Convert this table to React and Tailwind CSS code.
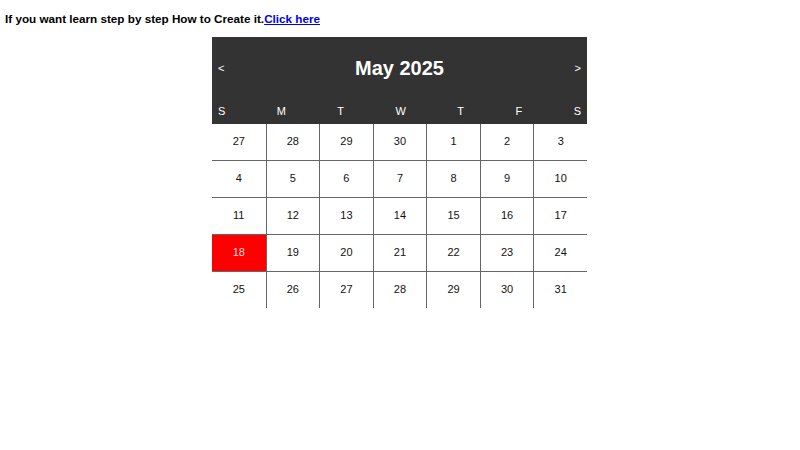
export default function App() {
  const days = ["S", "M", "T", "W", "T", "F", "S"];
  const nums = [
    27, 28, 29, 30, 1, 2, 3,
    4, 5, 6, 7, 8, 9, 10,
    11, 12, 13, 14, 15, 16, 17,
    18, 19, 20, 21, 22, 23, 24,
    25, 26, 27, 28, 29, 30, 31,
  ];
  return (
    <div className="w-[800px] h-[450px] bg-white" style={{ fontFamily: '"Liberation Sans", Arial, sans-serif' }}>
      <div className="pt-[11px] pl-[5px] text-[11.7px] leading-[15px] font-bold text-black">
        If you want learn step by step How to Create it.
        <a href="#" className="text-[#0000ee] underline">Click here</a>
      </div>
      <div className="mt-[11px] ml-[212px] w-[375px]">
        <div className="bg-[#333333] text-white pt-[17px] pb-[6px] px-[6px]">
          <div className="flex items-center justify-between h-[28px]">
            <span className="text-[11px]">&lt;</span>
            <span className="text-[20px] font-bold">May 2025</span>
            <span className="text-[11px]">&gt;</span>
          </div>
          <div className="mt-[22px] flex justify-between text-[11px] leading-[14px]">
            {days.map((d, i) => (
              <span key={i}>{d}</span>
            ))}
          </div>
        </div>
        <div className="grid grid-cols-7">
          {nums.map((n, i) => {
            const col = i % 7;
            const row = Math.floor(i / 7);
            const today = i === 21;
            return (
              <div
                key={i}
                className={
                  "flex items-center justify-center pb-[2px] text-[11px] border-[#666666] " +
                  (col > 0 ? "border-l " : "") +
                  (row < 4 ? "border-b h-[37px] " : "h-[36px] ") +
                  (today ? "bg-[#ff0000] text-[#ffdddd]" : "text-[#111111]")
                }
              >
                {n}
              </div>
            );
          })}
        </div>
      </div>
    </div>
  );
}
